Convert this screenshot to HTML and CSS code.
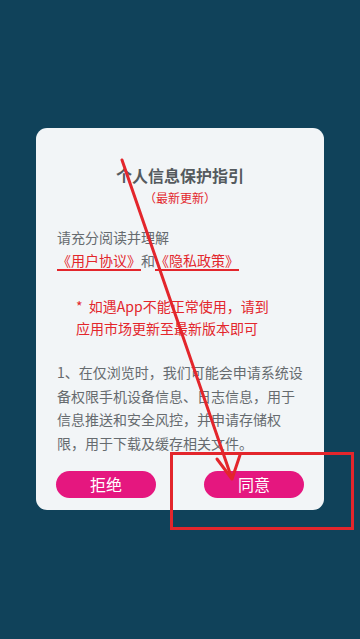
FILE: index.html
```html
<!DOCTYPE html>
<html lang="zh">
<head>
<meta charset="utf-8">
<link rel="stylesheet" href="styles.css">
</head>
<body>
<div class="screen">
  <div class="card">
    <div class="title">个人信息保护指引</div>
    <div class="subtitle">（最新更新）</div>
    <div class="intro">请充分阅读并理解</div>
    <div class="links"><span class="link">《用户协议》</span>和<span class="link">《隐私政策》</span></div>
    <div class="note">*&nbsp;&nbsp;如遇App不能正常使用，请到<br>应用市场更新至最新版本即可</div>
    <div class="para">1、在仅浏览时，我们可能会申请系统设备权限手机设备信息、日志信息，用于信息推送和安全风控，并申请存储权限，用于下载及缓存相关文件。</div>
    <div class="actions">
      <div class="btn">拒绝</div>
      <div class="btn">同意</div>
    </div>
  </div>
</div>
<svg class="annot" width="360" height="639" viewBox="0 0 360 639">
  <line x1="122" y1="160" x2="231" y2="476" stroke="#e3262c" stroke-width="3" stroke-linecap="round"/>
  <polyline points="217,459 232,479 240,455" fill="none" stroke="#e3262c" stroke-width="3" stroke-linejoin="round" stroke-linecap="round"/>
  <rect x="171.5" y="453.5" width="181" height="75" fill="none" stroke="#e3262c" stroke-width="3"/>
</svg>
</body>
</html>
```
FILE: styles.css
```css
html, body {
  margin: 0;
  padding: 0;
}
body {
  width: 360px;
  height: 639px;
  background: #10425a;
  font-family: "Noto Sans CJK SC", "Noto Sans", sans-serif;
  overflow: hidden;
  position: relative;
}
.screen {
  padding-top: 128px;
  display: flex;
  justify-content: center;
}
.card {
  width: 288px;
  box-sizing: border-box;
  background: #f2f5f7;
  border-radius: 11px;
  padding: 35px 20px 12px 20px;
}
.title {
  text-align: center;
  font-size: 16px;
  line-height: 24px;
  font-weight: bold;
  color: #555a5e;
}
.subtitle {
  margin-top: 1px;
  text-align: center;
  font-size: 12px;
  line-height: 20px;
  color: #e3262c;
}
.intro {
  margin-top: 18px;
  padding-left: 1px;
  font-size: 14px;
  line-height: 23px;
  color: #666b6f;
}
.links {
  padding-left: 1px;
  font-size: 14px;
  line-height: 23px;
  color: #666b6f;
}
.link {
  color: #e3262c;
  text-decoration: underline;
  text-decoration-color: #e3262c;
  text-decoration-thickness: 1.5px;
  text-underline-offset: 3px;
}
.note {
  margin-top: 23px;
  padding-left: 20px;
  font-size: 14px;
  line-height: 22px;
  color: #e3262c;
}
.para {
  margin-top: 22px;
  padding-left: 1px;
  font-size: 14px;
  line-height: 23.6px;
  color: #666b6f;
}
.actions {
  margin-top: 16px;
  display: flex;
  justify-content: space-between;
}
.btn {
  width: 100px;
  height: 27px;
  border-radius: 14px;
  background: #e5177f;
  color: #ffffff;
  font-size: 16px;
  line-height: 27px;
  text-align: center;
}
.annot {
  position: absolute;
  left: 0;
  top: 0;
  pointer-events: none;
}
```
